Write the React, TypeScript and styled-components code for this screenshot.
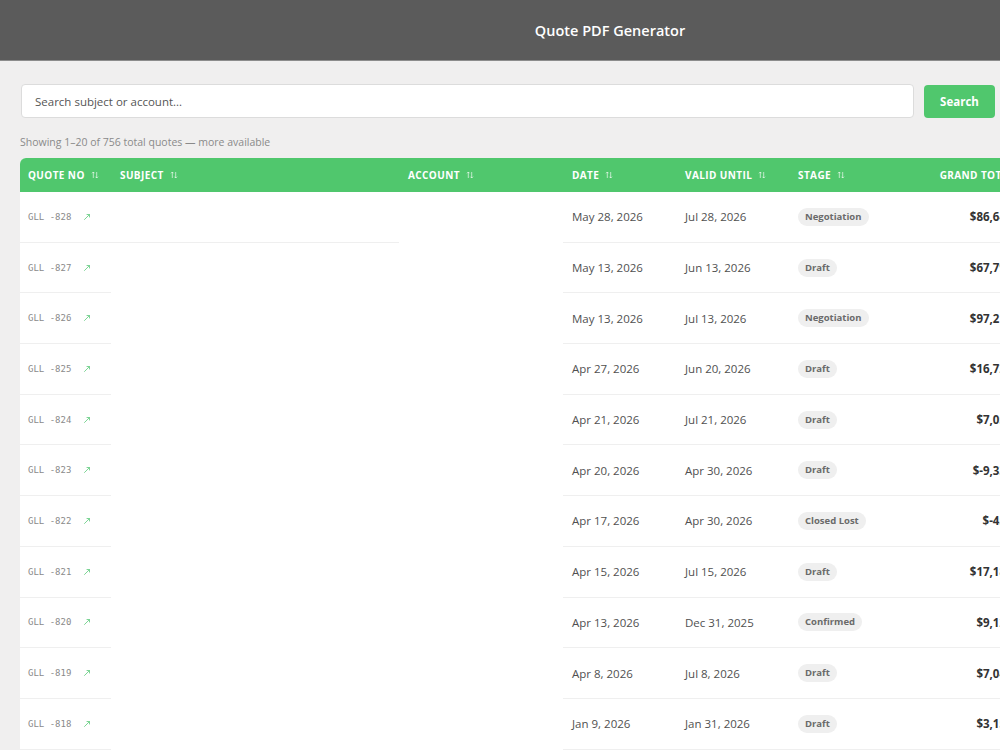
import styled, { createGlobalStyle } from "styled-components";

const GREEN = "#50c76d";

const GlobalStyle = createGlobalStyle`
  html, body {
    margin: 0;
    padding: 0;
    background: #f0efef;
    font-family: "Open Sans", "Liberation Sans", sans-serif;
  }
`;

interface Quote {
  no: number;
  date: string;
  validUntil: string;
  stage: string;
  total: string;
}

const quotes: Quote[] = [
  { no: 828, date: "May 28, 2026", validUntil: "Jul 28, 2026", stage: "Negotiation", total: "$86,642.50" },
  { no: 827, date: "May 13, 2026", validUntil: "Jun 13, 2026", stage: "Draft", total: "$67,790.00" },
  { no: 826, date: "May 13, 2026", validUntil: "Jul 13, 2026", stage: "Negotiation", total: "$97,215.40" },
  { no: 825, date: "Apr 27, 2026", validUntil: "Jun 20, 2026", stage: "Draft", total: "$16,720.00" },
  { no: 824, date: "Apr 21, 2026", validUntil: "Jul 21, 2026", stage: "Draft", total: "$7,050.00" },
  { no: 823, date: "Apr 20, 2026", validUntil: "Apr 30, 2026", stage: "Draft", total: "$-9,330.00" },
  { no: 822, date: "Apr 17, 2026", validUntil: "Apr 30, 2026", stage: "Closed Lost", total: "$-450.00" },
  { no: 821, date: "Apr 15, 2026", validUntil: "Jul 15, 2026", stage: "Draft", total: "$17,180.00" },
  { no: 820, date: "Apr 13, 2026", validUntil: "Dec 31, 2025", stage: "Confirmed", total: "$9,120.00" },
  { no: 819, date: "Apr 8, 2026", validUntil: "Jul 8, 2026", stage: "Draft", total: "$7,040.00" },
  { no: 818, date: "Jan 9, 2026", validUntil: "Jan 31, 2026", stage: "Draft", total: "$3,150.00" },
  { no: 817, date: "Jan 5, 2026", validUntil: "Feb 5, 2026", stage: "Draft", total: "$2,480.00" },
];

const columns = [
  { label: "Quote No", align: "left" },
  { label: "Subject", align: "left" },
  { label: "Account", align: "left" },
  { label: "Date", align: "left" },
  { label: "Valid Until", align: "left" },
  { label: "Stage", align: "left" },
  { label: "Grand Total", align: "right" },
  { label: "Actions", align: "left" },
];

const SortIcon = () => (
  <svg width="8" height="8" viewBox="0 0 8 8" fill="none" stroke="rgba(255,255,255,0.7)" strokeWidth="0.9">
    <path d="M2.3 7V1M1 2.3L2.3 1l1.3 1.3" />
    <path d="M5.7 1v6M4.4 5.7l1.3 1.3 1.3-1.3" />
  </svg>
);

const OpenIcon = () => (
  <svg width="8" height="8" viewBox="0 0 8 8" fill="none" stroke="#6fd08a" strokeWidth="0.9" strokeLinecap="round">
    <path d="M1.5 6.5L6.5 1.5M4 1.5h2.5v2.5" />
  </svg>
);

const App = () => {
  return (
    <Page>
      <GlobalStyle />
      <TopBar>
        <Title>Quote PDF Generator</Title>
      </TopBar>
      <Main>
        <SearchRow>
          <SearchInput placeholder="Search subject or account..." />
          <SearchButton>Search</SearchButton>
        </SearchRow>
        <Summary>Showing 1–20 of 756 total quotes — more available</Summary>
        <Table>
          <HeadRow>
            {columns.map((c) => (
              <HeadCell key={c.label} $align={c.align}>
                {c.label}
                <SortIcon />
              </HeadCell>
            ))}
          </HeadRow>
          {quotes.map((q, i) => (
            <Row key={q.no}>
              <Cell $lined>
                <QuoteNo>GLL -{q.no}</QuoteNo>
                <OpenIcon />
              </Cell>
              <Cell $lined={i === 0} />
              <Cell />
              <Cell $lined>{q.date}</Cell>
              <Cell $lined>{q.validUntil}</Cell>
              <Cell $lined>
                <Badge>{q.stage}</Badge>
              </Cell>
              <Cell $lined $align="right">
                <Total>{q.total}</Total>
              </Cell>
              <Cell $lined>
                <PdfLink>PDF</PdfLink>
              </Cell>
            </Row>
          ))}
        </Table>
      </Main>
    </Page>
  );
};

export default App;

const Page = styled.div`
  display: inline-block;
  min-width: 100%;
`;

const TopBar = styled.header`
  display: flex;
  align-items: center;
  justify-content: center;

  height: 60px;

  background: #5b5b5b;
  border-bottom: 1px solid #8c8c8c;
`;

const Title = styled.h1`
  margin: 0;

  color: #ffffff;

  font-size: 14.5px;
  font-weight: 600;
`;

const Main = styled.main`
  padding: 23px 20px 20px 20px;
`;

const SearchRow = styled.div`
  display: flex;
  gap: 10px;

  max-width: 975px;
`;

const SearchInput = styled.input`
  flex: 1;

  height: 34px;
  box-sizing: border-box;
  margin-left: 1px;
  padding: 0 13px;

  border: 1px solid #dcdcdc;
  border-radius: 4px;
  background: #ffffff;

  font-family: inherit;
  font-size: 11.5px;
  color: #333;

  &::placeholder {
    color: #555;
  }

  &:focus {
    outline: none;
    border-color: ${GREEN};
  }
`;

const SearchButton = styled.button`
  width: 71px;
  height: 33px;
  margin-top: 1px;

  border: none;
  border-radius: 4px;
  background: ${GREEN};

  color: #ffffff;
  font-family: inherit;
  font-size: 11.5px;
  font-weight: 700;
`;

const Summary = styled.div`
  margin-top: 17px;
  margin-bottom: 9px;

  color: #8a8a8a;

  font-size: 10.5px;
`;

const Table = styled.div`
  width: 1180px;

  border-radius: 6px 6px 0 0;
  background: #ffffff;
  overflow: hidden;
`;

const gridColumns = "91px 288px 164px 113px 113px 111px 138px 162px";

const HeadRow = styled.div`
  display: grid;
  grid-template-columns: ${gridColumns};

  height: 34px;

  background: ${GREEN};
`;

const HeadCell = styled.div<{ $align: string }>`
  display: flex;
  align-items: center;
  justify-content: ${(p) => (p.$align === "right" ? "flex-end" : "flex-start")};
  gap: 6px;

  padding: 0 9px 0 9px;

  color: #ffffff;

  font-size: 10px;
  font-weight: 700;
  letter-spacing: 0.4px;
  text-transform: uppercase;

  &:first-child {
    padding-left: 8px;
  }
`;

const Row = styled.div`
  display: grid;
  grid-template-columns: ${gridColumns};

  height: 50.7px;
`;

const Cell = styled.div<{ $lined?: boolean; $align?: string }>`
  display: flex;
  align-items: center;
  justify-content: ${(p) => (p.$align === "right" ? "flex-end" : "flex-start")};
  gap: 12px;

  box-sizing: border-box;
  padding: 0 9px 0 9px;

  border-bottom: 1px solid ${(p) => (p.$lined ? "#efefef" : "transparent")};

  color: #505050;

  font-size: 11.5px;

  &:first-child {
    padding-left: 8px;
  }
`;

const QuoteNo = styled.span`
  color: #8a8a8a;

  font-family: "DejaVu Sans Mono", "Liberation Mono", monospace;
  font-size: 9px;
`;

const Badge = styled.span`
  padding: 2px 7px 3px 7px;

  border-radius: 10px;
  background: #efefef;

  color: #6a6a6a;

  font-size: 9.5px;
  font-weight: 700;
`;

const Total = styled.span`
  color: #333333;

  font-size: 11.5px;
  font-weight: 700;
`;

const PdfLink = styled.span`
  color: ${GREEN};

  font-size: 11px;
  font-weight: 700;
`;
